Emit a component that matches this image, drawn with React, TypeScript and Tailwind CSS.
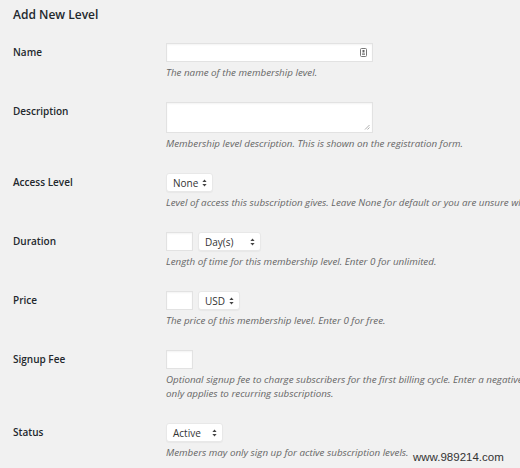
import type { ReactNode } from "react";

const font = { fontFamily: '"Open Sans", "Noto Sans", sans-serif' };

function Field({ label, children, last }: { label: string; children: ReactNode; last?: boolean }) {
  return (
    <div className={`flex ${last ? "" : "pb-[22px]"}`}>
      <div className="w-[153px] shrink-0 text-[10px] font-semibold leading-[19px] text-[#23282d]">
        {label}
      </div>
      <div className="min-w-0 flex-1">{children}</div>
    </div>
  );
}

function Hint({ children }: { children: ReactNode }) {
  return (
    <p className="mt-[4px] whitespace-nowrap text-[9.8px] italic leading-[14px] text-[#666]">
      {children}
    </p>
  );
}

function TextBox({ className = "", children }: { className?: string; children?: ReactNode }) {
  return (
    <div
      className={`relative h-[19px] border border-[#e2e2e2] bg-white shadow-[inset_0_1px_2px_rgba(0,0,0,0.05)] ${className}`}
    >
      {children}
    </div>
  );
}

function Select({ value, width }: { value: string; width: string }) {
  return (
    <div
      className={`flex h-[19px] items-center justify-between rounded-[3px] border border-[#e8e8e8] bg-white pl-[6px] pr-[5px] text-[10px] leading-none text-[#333] shadow-[0_1px_1px_rgba(0,0,0,0.04)] ${width}`}
    >
      <span>{value}</span>
      <svg width="5" height="8" viewBox="0 0 5 8" className="shrink-0 text-[#444]">
        <path d="M2.5 0.5 L4.6 3 H0.4 Z" fill="currentColor" />
        <path d="M2.5 7.5 L4.6 5 H0.4 Z" fill="currentColor" />
      </svg>
    </div>
  );
}

export default function App() {
  return (
    <div
      className="relative h-[468px] w-[520px] overflow-hidden bg-[#f1f1f1] px-[13px] pt-[5px]"
      style={font}
    >
      <h1 className="text-[12px] font-semibold leading-[20px] text-[#23282d]">Add New Level</h1>

      <div className="mt-[18px]">
        <Field label="Name">
          <TextBox className="w-[207px]">
            <svg
              width="7"
              height="9"
              viewBox="0 0 7 9"
              className="absolute right-[5px] top-[4px]"
            >
              <rect x="0.5" y="0.5" width="6" height="8" rx="1" fill="#fff" stroke="#777" />
              <rect x="2.5" y="2" width="2" height="2.5" fill="#666" />
              <rect x="2" y="5.5" width="3" height="1.2" fill="#666" />
            </svg>
          </TextBox>
          <Hint>The name of the membership level.</Hint>
        </Field>

        <Field label="Description">
          <TextBox className="!h-[31px] w-[207px]">
            <svg width="6" height="6" viewBox="0 0 6 6" className="absolute bottom-[2px] right-[2px]">
              <path d="M1 5.5 L5.5 1 M3.5 5.5 L5.5 3.5" stroke="#999" strokeWidth="0.8" />
            </svg>
          </TextBox>
          <Hint>Membership level description. This is shown on the registration form.</Hint>
        </Field>

        <Field label="Access Level">
          <Select value="None" width="w-[47px]" />
          <Hint>
            Level of access this subscription gives. Leave None for default or you are unsure what
            this is.
          </Hint>
        </Field>

        <Field label="Duration">
          <div className="flex gap-[5px]">
            <TextBox className="w-[27px]" />
            <Select value="Day(s)" width="w-[63px]" />
          </div>
          <Hint>Length of time for this membership level. Enter 0 for unlimited.</Hint>
        </Field>

        <Field label="Price">
          <div className="flex gap-[5px]">
            <TextBox className="w-[27px]" />
            <Select value="USD" width="w-[42px]" />
          </div>
          <Hint>The price of this membership level. Enter 0 for free.</Hint>
        </Field>

        <Field label="Signup Fee">
          <TextBox className="w-[27px]" />
          <Hint>
            Optional signup fee to charge subscribers for the first billing cycle. Enter a negative
            value to give a discount. This
            <br />
            only applies to recurring subscriptions.
          </Hint>
        </Field>

        <Field label="Status" last>
          <Select value="Active" width="w-[57px]" />
          <Hint>Members may only sign up for active subscription levels.</Hint>
        </Field>
      </div>

      <span
        className="absolute left-[413px] top-[450px] text-[11.5px] leading-[14px] text-[#333]"
        style={{ fontFamily: '"Liberation Sans", Arial, sans-serif' }}
      >
        www.989214.com
      </span>
    </div>
  );
}
